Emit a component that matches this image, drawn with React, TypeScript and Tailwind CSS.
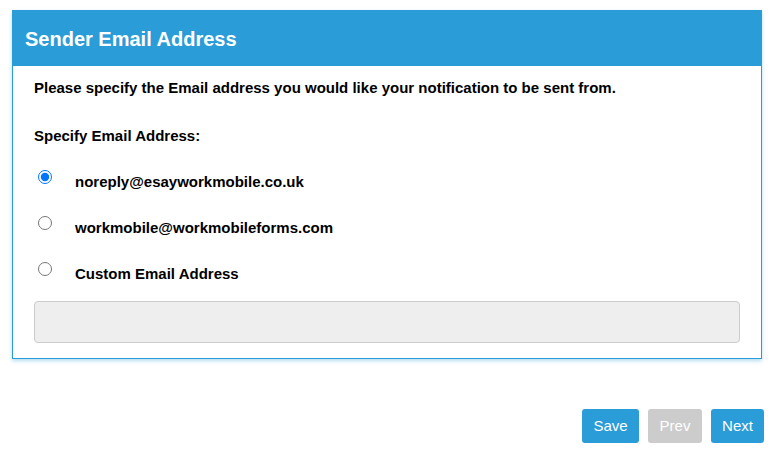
export default function App() {
  return (
    <div className="min-h-[457px] bg-white pl-3 pr-[14px] pt-[10px] font-['Liberation_Sans',Arial,sans-serif]">
      {/* Panel */}
      <div className="border border-[#2a9cd8] shadow-[0_2px_4px_rgba(42,156,216,0.35)]">
        <div className="flex h-[55px] items-center bg-[#2a9cd8] px-3">
          <h2 className="text-[20px] font-bold text-white">Sender Email Address</h2>
        </div>

        <div className="px-[21px] pb-[15px] pt-[12px] text-[15px] font-bold text-black">
          <p className="leading-[20px]">
            Please specify the Email address you would like your notification to be sent from.
          </p>
          <p className="mt-[28px] leading-[20px]">Specify Email Address:</p>

          <div className="mt-[23px] flex flex-col gap-[26px]">
            {[
              { label: "noreply@esayworkmobile.co.uk", checked: true },
              { label: "workmobile@workmobileforms.com", checked: false },
              { label: "Custom Email Address", checked: false },
            ].map((o) => (
              <label key={o.label} className="flex h-[20px] items-center">
                <input
                  type="radio"
                  name="sender"
                  defaultChecked={o.checked}
                  className="m-0 ml-[4px] mb-[4px] h-[14px] w-[14px] accent-[#0075ff]"
                />
                <span className="ml-[23px] mt-[5px] leading-[20px]">{o.label}</span>
              </label>
            ))}
          </div>

          <div className="mt-[20px] h-[42px] rounded border border-[#cccccc] bg-[#eeeeee]" />
        </div>
      </div>

      {/* Buttons */}
      <div className="mt-[50px] flex justify-end gap-[9px] text-[15px]">
        <button className="h-[34px] w-[57px] rounded-[3px] bg-[#2a9cd8] text-white">Save</button>
        <button className="h-[34px] w-[54px] rounded-[3px] bg-[#cccccc] text-white">Prev</button>
        <button className="mr-[-2px] h-[34px] w-[53px] rounded-[3px] bg-[#2a9cd8] text-white">Next</button>
      </div>
    </div>
  );
}
